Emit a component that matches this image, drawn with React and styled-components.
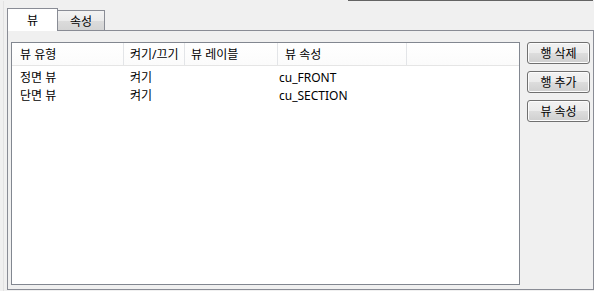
import React from 'react';
import styled, { createGlobalStyle } from 'styled-components';

const GlobalStyle = createGlobalStyle`
  html, body {
    margin: 0;
    padding: 0;
    background: #f0f0f0;
  }
  body {
    font-family: "Noto Sans", "Noto Sans CJK KR", sans-serif;
    font-size: 12px;
    color: #000;
  }
`;

const Window = styled.div`
  width: 594px;
  height: 291px;
  background: #f0f0f0;
  overflow: hidden;
  box-sizing: border-box;
`;

const TopEdge = styled.div`
  height: 1px;
  width: 245px;
  margin-left: 348px;
  background: #646464;
`;

const Frame = styled.div`
  margin-left: 3px;
  border-left: 1px solid #e2e2e2;
  padding-left: 3px;
  padding-top: 7px;
  height: 290px;
  box-sizing: border-box;
`;

const TabRow = styled.div`
  display: flex;
  align-items: flex-end;
  height: 22px;
`;

const Tab = styled.div`
  display: flex;
  align-items: center;
  justify-content: center;
  box-sizing: border-box;
  border: 1px solid #898c95;
  border-bottom: none;
  line-height: 14px;
  ${p => p.$active ? `
    width: 51px;
    height: 23px;
    margin-bottom: -1px;
    background: #ffffff;
    position: relative;
    z-index: 1;
    padding-top: 1px;
  ` : `
    width: 48px;
    height: 20px;
    margin-left: -1px;
    background: linear-gradient(#f3f3f3, #ebebeb 50%, #dcdcdc 51%, #d4d4d4);
    padding-top: 2px;
  `}
`;

const Panel = styled.div`
  width: 587px;
  height: 260px;
  box-sizing: border-box;
  border: 1px solid #898c95;
  display: flex;
  padding: 11px 3px 4px 3px;
`;

const List = styled.div`
  width: 509px;
  height: 243px;
  box-sizing: border-box;
  border: 1px solid #828790;
  background: #fff;
  display: flex;
  flex-direction: column;
`;

const Header = styled.div`
  display: flex;
  height: 23px;
  box-sizing: border-box;
  border-bottom: 1px solid #e5e5e5;
  background: linear-gradient(#ffffff, #fbfbfb);
`;

const HeaderCell = styled.div`
  width: ${p => p.$w}px;
  box-sizing: border-box;
  padding-left: ${p => p.$pad}px;
  padding-top: 2px;
  border-right: 1px solid #e3e5e8;
  display: flex;
  align-items: center;
  line-height: 14px;
`;

const Rows = styled.div`
  padding-top: 3px;
`;

const Row = styled.div`
  display: flex;
  height: 18px;
  align-items: center;
  line-height: 14px;
`;

const Cell = styled.div`
  width: ${p => p.$w}px;
  box-sizing: border-box;
  padding-left: ${p => p.$pad}px;
  white-space: nowrap;
`;

const Buttons = styled.div`
  display: flex;
  flex-direction: column;
  gap: 7px;
  margin-left: 7px;
`;

const Button = styled.button`
  width: 63px;
  height: 22px;
  box-sizing: border-box;
  border: 1px solid #707070;
  border-radius: 3px;
  background: linear-gradient(#f2f2f2, #ebebeb 50%, #dddddd 51%, #cfcfcf);
  box-shadow: inset 0 0 0 1px #fcfcfc;
  font-family: inherit;
  font-size: 12px;
  line-height: 14px;
  color: #000;
  padding: 1px 0 0 0;
`;

const columns = [
  { title: '뷰 유형', w: 112, hp: 8, rp: 8 },
  { title: '켜기/끄기', w: 61, hp: 6, rp: 6 },
  { title: '뷰 레이블', w: 93, hp: 6, rp: 6 },
  { title: '뷰 속성', w: 129, hp: 7, rp: 1 },
];

const rows = [
  ['정면 뷰', '켜기', '', 'cu_FRONT'],
  ['단면 뷰', '켜기', '', 'cu_SECTION'],
];

export default function App() {
  return (
    <Window>
      <GlobalStyle />
      <TopEdge />
      <Frame>
        <TabRow>
          <Tab $active>뷰</Tab>
          <Tab>속성</Tab>
        </TabRow>
        <Panel>
          <List>
            <Header>
              {columns.map(c => (
                <HeaderCell key={c.title} $w={c.w} $pad={c.hp}>{c.title}</HeaderCell>
              ))}
            </Header>
            <Rows>
              {rows.map((r, i) => (
                <Row key={i}>
                  {r.map((v, j) => (
                    <Cell key={j} $w={columns[j].w} $pad={columns[j].rp}>{v}</Cell>
                  ))}
                </Row>
              ))}
            </Rows>
          </List>
          <Buttons>
            <Button>행 삭제</Button>
            <Button>행 추가</Button>
            <Button>뷰 속성</Button>
          </Buttons>
        </Panel>
      </Frame>
    </Window>
  );
}
